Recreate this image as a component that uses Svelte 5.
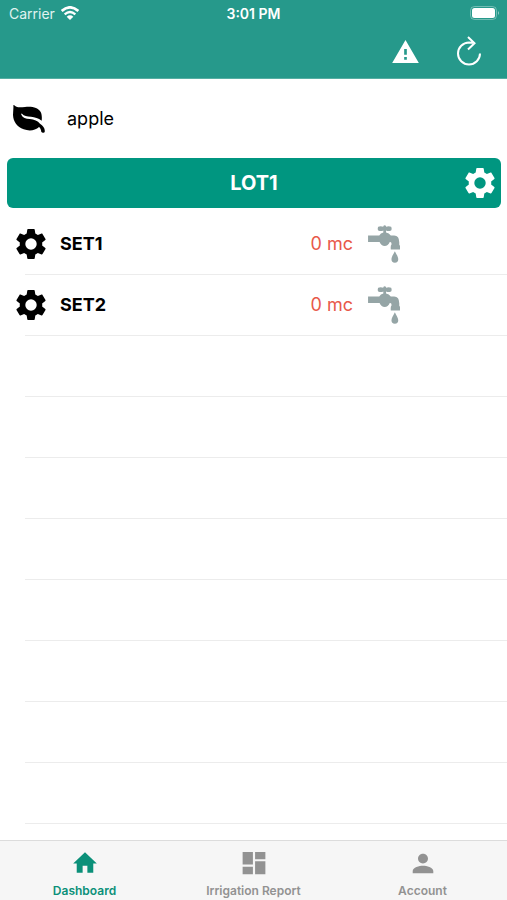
<script>
  const sets = [
    { name: 'SET1', volume: '0 mc' },
    { name: 'SET2', volume: '0 mc' },
  ];
  const emptyRows = Array.from({ length: 8 });
</script>

{#snippet gear()}
  <svg class="gear" viewBox="0 0 24 24" aria-hidden="true">
    <path
      d="M19.43 12.98c.04-.32.07-.64.07-.98s-.03-.66-.07-.98l2.11-1.65c.19-.15.24-.42.12-.64l-2-3.46c-.12-.22-.39-.3-.61-.22l-2.49 1c-.52-.4-1.08-.73-1.69-.98l-.38-2.65C14.46 2.18 14.25 2 14 2h-4c-.25 0-.46.18-.49.42l-.38 2.65c-.61.25-1.17.59-1.69.98l-2.49-1c-.23-.09-.49 0-.61.22l-2 3.46c-.13.22-.07.49.12.64l2.11 1.65c-.04.32-.07.65-.07.98s.03.66.07.98l-2.11 1.65c-.19.15-.24.42-.12.64l2 3.46c.12.22.39.3.61.22l2.49-1c.52.4 1.08.73 1.69.98l.38 2.65c.03.24.24.42.49.42h4c.25 0 .46-.18.49-.42l.38-2.65c.61-.25 1.17-.59 1.69-.98l2.49 1c.23.09.49 0 .61-.22l2-3.46c.12-.22.07-.49-.12-.64l-2.11-1.65zM12 15.8a3.8 3.8 0 1 1 0-7.6 3.8 3.8 0 0 1 0 7.6z"
    />
  </svg>
{/snippet}

<div class="screen">
  <header>
    <div class="status">
      <div class="carrier">
        <span>Carrier</span>
        <svg class="wifi" viewBox="0 0 54 42" aria-hidden="true">
          <path d="M27 42 L17 32 Q27 24 37 32Z" fill="#fff" />
          <path d="M11 25Q27 11 43 25" fill="none" stroke="#fff" stroke-width="7" />
          <path d="M2 15Q27 -7 52 15" fill="none" stroke="#fff" stroke-width="8" />
        </svg>
      </div>
      <span class="time">3:01 PM</span>
      <svg class="battery" viewBox="0 0 30 14" aria-hidden="true">
        <rect x="0.500" y="0.500" width="26" height="13" rx="4" fill="none" stroke="#fff" stroke-opacity="0.35" />
        <rect x="2" y="2" width="23" height="10" rx="2.500" fill="#fff" />
        <path d="M28 5q2 2 0 4z" fill="#fff" fill-opacity="0.5" />
      </svg>
    </div>
    <div class="actions">
      <button type="button" aria-label="Alerts">
        <svg class="warning" viewBox="0 0 80 69" aria-hidden="true">
          <path fill-rule="evenodd" d="M40 0 80 69H0ZM36 27v17h8V27ZM36 51v8h8v-8Z" />
        </svg>
      </button>
      <button type="button" aria-label="Refresh">
        <svg class="refresh" viewBox="0 0 24 30" aria-hidden="true">
          <path d="M23 17.500A11 11 0 1 1 12 6.500L17.500 7M11 1l6.500 6.200L11 13.500" />
        </svg>
      </button>
    </div>
  </header>

  <main>
    <div class="crop">
      <svg class="leaf" viewBox="0 0 96 84" aria-hidden="true">
        <path
          d="M3 0C9 8 19 8 36 6C56 3 76 8 83 21C87 29 87 38 86 47C76 39 66 36 54 35C42 34 33 33 27 26Q24 24 25 29C29 38 38 41 50 42C64 43 74 48 81 56C91 63 97 70 95 81Q94 84 89 83L85 81C84 74 82 69 78 66C67 77 48 79 32 73C12 66 1 50 0 30C0 19 2 10 1 1Z"
        />
      </svg>
      <span>apple</span>
    </div>

    <div class="lot">
      <h1>LOT1</h1>
      <button type="button" aria-label="LOT1 settings">{@render gear()}</button>
    </div>

    <ul>
      {#each sets as set}
        <li>
          <button type="button" aria-label="{set.name} settings">{@render gear()}</button>
          <strong>{set.name}</strong>
          <span class="volume">{set.volume}</span>
          <svg class="tap" viewBox="0 0 94 112" aria-hidden="true">
            <path
              d="M30 5q7-3 15 0v-2q4-5 8 0v2q8-3 15 0 3 6 0 11-8 3-15 0v6q9 1 14 9h10q15 1 15 20v7q3 1 2 14H67q-1-13 2-14v-4q0-4-5-4-5 12-15 12T34 50H0V31h33q4-7 12-9v-6q-7 3-15 0-3-5 0-11Z"
            />
            <path d="M79 77c4 9 10 16 10 24a10 10 0 0 1-20 0c0-8 6-15 10-24Z" />
          </svg>
        </li>
      {/each}
      {#each emptyRows as _}
        <li aria-hidden="true"></li>
      {/each}
    </ul>
  </main>

  <nav>
    <a class="current" href="#dashboard" aria-current="page">
      <svg viewBox="1 1.500 22 22" aria-hidden="true"><path d="M10 20v-6h4v6h5v-8h3L12 2.500 2 12h3v8z" /></svg>
      <span>Dashboard</span>
    </a>
    <a href="#report">
      <svg viewBox="0 0 24 24" aria-hidden="true"><path d="M1.500 1h9.500v11.500H1.500zM13 1h9.500v6.500H13zM1.500 14.500h9.500v7H1.500zM13 9.500h9.500v12H13z" /></svg>
      <span>Irrigation Report</span>
    </a>
    <a href="#account">
      <svg viewBox="0 0 24 24" aria-hidden="true"><path d="M12 11.500c2.700 0 4.600-2 4.600-4.500S14.700 2.500 12 2.500 7.400 4.500 7.400 7 9.300 11.500 12 11.500zm0 2c-3.400 0-9.500 1.500-9.500 5v2h19v-2c0-3.500-6.100-5-9.500-5z" /></svg>
      <span>Account</span>
    </a>
  </nav>
</div>

<style>
  .screen {
    display: flex;
    flex-direction: column;
    height: 100vh;
    background: #fff;
    color: #000;
    font-family: Inter, 'Liberation Sans', sans-serif;
  }
  button {
    display: flex;
    align-items: center;
    justify-content: center;
    padding: 0;
    border: 0;
    background: none;
    color: inherit;
  }
  svg {
    display: block;
    flex: none;
    fill: currentColor;
  }
  .gear {
    width: 36px;
    height: 36px;
  }

  header {
    flex: none;
    background: #26998b;
    border-bottom: 1px solid #56aea3;
    color: #fff;
  }
  .status {
    display: grid;
    grid-template-columns: 1fr auto 1fr;
    align-items: center;
    height: 26px;
    padding: 0 7px;
    font-size: 14px;
  }
  .carrier {
    display: flex;
    align-items: center;
    gap: 6px;
    padding-left: 2px;
    color: #e0f3f0;
  }
  .wifi {
    width: 18px;
    height: 14px;
  }
  .time {
    font-weight: 600;
  }
  .battery {
    width: 30px;
    height: 14px;
    justify-self: end;
  }
  .actions {
    display: flex;
    justify-content: flex-end;
    box-sizing: border-box;
    height: 52px;
    padding: 0 6px 2px 0;
  }
  .actions button {
    width: 64px;
  }
  .warning {
    width: 27px;
    height: 23px;
  }
  .refresh {
    width: 24px;
    height: 30px;
    fill: none;
    stroke: currentColor;
    stroke-width: 2;
  }

  main {
    flex: 1;
    min-height: 0;
    overflow: hidden;
  }
  .crop {
    display: flex;
    align-items: center;
    gap: 22px;
    height: 79px;
    padding-left: 13px;
    font-size: 18px;
  }
  .leaf {
    width: 32px;
    height: 28px;
  }
  .lot {
    display: grid;
    grid-template-columns: 42px 1fr 42px;
    align-items: center;
    height: 50px;
    margin: 0 6px 6px 7px;
    border-radius: 6px;
    background: #009680;
    color: #fff;
  }
  h1 {
    grid-column: 2;
    margin: 0;
    text-align: center;
    font-size: 20px;
    font-weight: 700;
  }
  ul {
    margin: 0;
    padding: 0;
    list-style: none;
  }
  li {
    display: grid;
    grid-template-columns: 36px 1fr auto 32px;
    align-items: center;
    box-sizing: border-box;
    height: 61px;
    padding: 0 107px 2px 13px;
    background: linear-gradient(#ececec, #ececec) 25px 100% / 100% 1px no-repeat;
    font-size: 18px;
  }
  strong {
    padding-left: 11px;
    font-weight: 700;
  }
  .volume {
    padding-right: 15px;
    color: #e8594a;
  }
  .tap {
    width: 32px;
    height: 38px;
    color: #95a5a6;
  }

  nav {
    display: grid;
    grid-template-columns: repeat(3, 1fr);
    flex: none;
    height: 59px;
    border-top: 1px solid #dcdcdc;
    background: #f6f6f6;
  }
  nav a {
    display: flex;
    flex-direction: column;
    align-items: center;
    gap: 6px;
    padding-top: 10px;
    color: #929292;
    font-size: 12px;
    font-weight: 600;
    line-height: 16px;
    text-decoration: none;
  }
  nav a.current {
    color: #0b9079;
  }
  nav svg {
    width: 26px;
    height: 26px;
  }
</style>
